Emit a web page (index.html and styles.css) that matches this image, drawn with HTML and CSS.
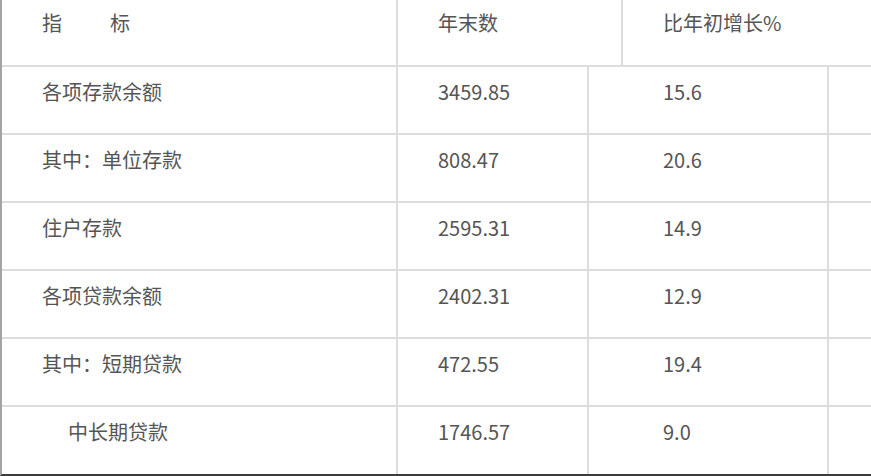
FILE: index.html
```html
<!DOCTYPE html>
<html lang="zh-CN">
<head>
<meta charset="utf-8">
<title>指标</title>
<link rel="stylesheet" href="styles.css">
</head>
<body>
<div class="frame">
  <div class="grid">
    <div class="cell head">指<span class="gap"></span>标</div>
    <div class="cell head span2">年末数</div>
    <div class="cell head span2">比年初增长%</div>

    <div class="cell">各项存款余额</div>
    <div class="cell">3459.85</div><div class="cell"></div>
    <div class="cell">15.6</div><div class="cell"></div>

    <div class="cell">其中：单位存款</div>
    <div class="cell">808.47</div><div class="cell"></div>
    <div class="cell">20.6</div><div class="cell"></div>

    <div class="cell">住户存款</div>
    <div class="cell">2595.31</div><div class="cell"></div>
    <div class="cell">14.9</div><div class="cell"></div>

    <div class="cell">各项贷款余额</div>
    <div class="cell">2402.31</div><div class="cell"></div>
    <div class="cell">12.9</div><div class="cell"></div>

    <div class="cell">其中：短期贷款</div>
    <div class="cell">472.55</div><div class="cell"></div>
    <div class="cell">19.4</div><div class="cell"></div>

    <div class="cell indent">中长期贷款</div>
    <div class="cell">1746.57</div><div class="cell"></div>
    <div class="cell">9.0</div><div class="cell"></div>
  </div>
</div>
</body>
</html>
```

FILE: styles.css
```css
html, body {
  margin: 0;
  padding: 0;
  background: #ffffff;
  overflow: hidden;
}

.frame {
  width: 869px;
  height: 474px;
  border-left: 2px solid #a3a3a3;
  border-bottom: 2px solid #3c3c3c;
  overflow: hidden;
  background: #ffffff;
}

.grid {
  display: grid;
  grid-template-columns: 394px 189px 32px 204px 42px;
  grid-template-rows: 65px repeat(5, 66px) 67px;
  column-gap: 2px;
  row-gap: 2px;
  background: #dddddd;
  font-family: "Noto Sans CJK SC", "Noto Sans", sans-serif;
  font-size: 20px;
  line-height: 30px;
  color: #555555;
}

.cell {
  background: #ffffff;
  padding: 10px 0 0 40px;
  white-space: nowrap;
  overflow: hidden;
}

.head {
  padding-top: 8px;
}

.span2 {
  grid-column: span 2;
}

.gap {
  display: inline-block;
  width: 48px;
}

.indent {
  padding-left: 66px;
}
```
